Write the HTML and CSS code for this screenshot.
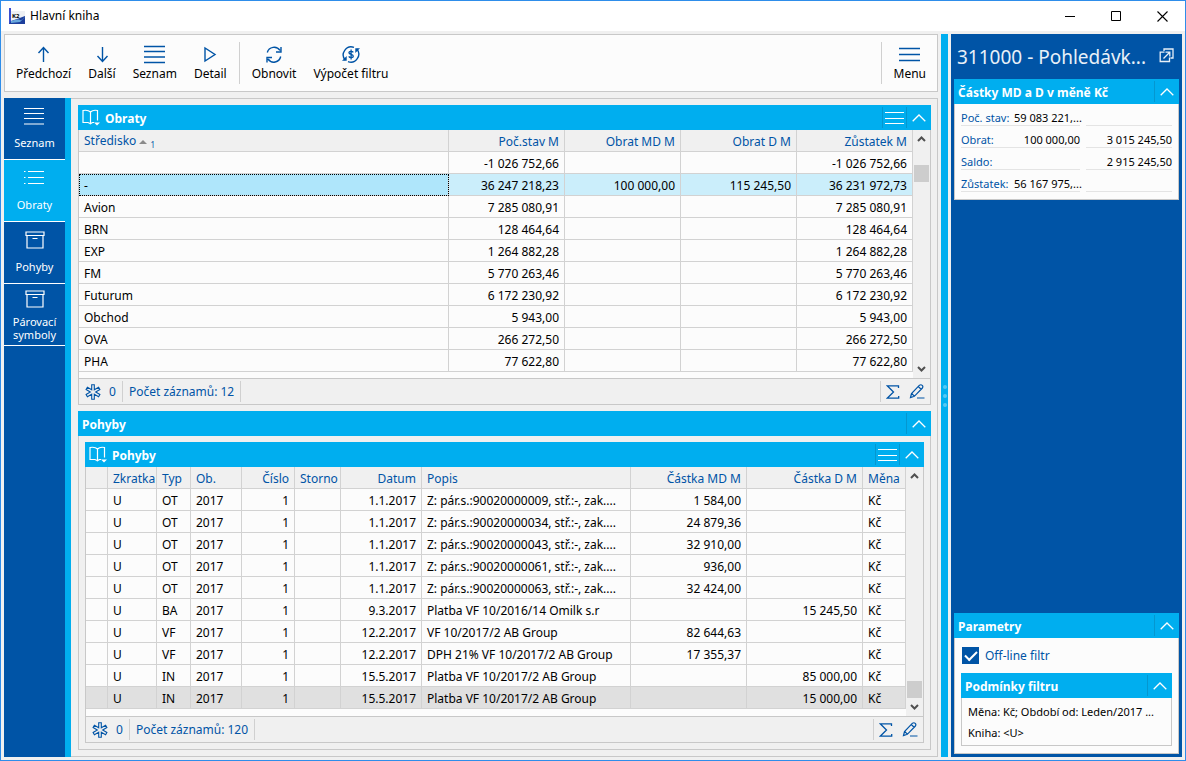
FILE: index.html
```html
<!DOCTYPE html>
<html lang="cs">
<head>
<meta charset="utf-8">
<title>Hlavní kniha</title>
<link rel="stylesheet" href="styles.css">
</head>
<body>
<svg class="defs" aria-hidden="true">
  <symbol id="chevron" viewBox="0 0 14 8"><path d="M.7 7.200 7 1l6.300 6.200" fill="none" stroke="currentColor" stroke-width="1.300"/></symbol>
  <symbol id="arrow-up" viewBox="0 0 9 6"><path d="M1 5 4.500 1.500 8 5" fill="none" stroke="currentColor" stroke-width="2"/></symbol>
  <symbol id="lines3" viewBox="0 0 20 14"><path d="M0 1.500h19M0 7.500h19M0 12.500h19" stroke="currentColor" stroke-width="1.200"/></symbol>
  <symbol id="book" viewBox="0 0 18 17"><path d="M8.500 3C7 1.500 4 1 1 1.500v12h5l2.500 1.200M8.500 3c1.500-1.500 4.500-2 7-1.500v10M8.500 3v11.700l2-1.200h1.500" fill="none" stroke="currentColor" stroke-width="1.200"/><path d="M12 13.500h6L15 16.500z" fill="currentColor"/></symbol>
  <symbol id="asterisk" viewBox="0 0 16 16"><g fill="none" stroke="currentColor" stroke-width="1.100"><path d="M6.700 5.700V.8h2.600v4.900l4.300-2.500 1.300 2.300L10.700 8l4.200 2.500-1.300 2.300-4.300-2.500v4.900H6.700v-4.900l-4.300 2.500-1.300-2.300L5.300 8 1.100 5.500l1.300-2.300z"/></g></symbol>
  <symbol id="sigma" viewBox="0 0 14 14"><path d="M12.500 3V.8H1.200L7.500 7l-6.300 6.200h11.500V11" fill="none" stroke="currentColor" stroke-width="1.300"/></symbol>
  <symbol id="pencil" viewBox="0 0 16 15"><path d="M1.500 13.500 2.500 9.500 10.500 1.200q1.500-1 2.700.2t.2 2.600L5.300 12.300zM2.700 9.500l2.600 2.600M9.300 2.500l2.800 2.700M8 14h7.500" fill="none" stroke="currentColor" stroke-width="1.200"/></symbol>
  <symbol id="archive" viewBox="0 0 20 18"><path d="M1 1h18v3.500H1zM2 4.500v12.500h16V4.500M7.500 7.500h5" fill="none" stroke="currentColor" stroke-width="1.200"/></symbol>
</svg>

<div class="window">
  <header class="titlebar">
    <svg class="logo" width="16" height="16" viewBox="0 0 16 16"><rect x="2" y="3" width="14" height="10" fill="#eef0f4"/><rect width="2" height="16" fill="#3a4fd0"/><path d="M2 13 8 11 16 8v8H0z" fill="#1d3f9c"/><path d="M2 13c4-1 7-2 9-1s3-2 5-3l-5 5-9 1z" fill="#68a8dd"/><text x="3" y="10" class="logo-text">K2</text></svg>
    <h1 class="titlebar-text">Hlavní kniha</h1>
    <div class="window-buttons">
      <button class="window-button" aria-label="Minimalizovat"><svg width="11" height="11" viewBox="0 0 11 11"><path d="M0 5.500h10" stroke="#000"/></svg></button>
      <button class="window-button" aria-label="Maximalizovat"><svg width="11" height="11" viewBox="0 0 11 11"><path d="M.5.5h9v9h-9z" fill="none" stroke="#000"/></svg></button>
      <button class="window-button" aria-label="Zavřít"><svg width="11" height="11" viewBox="0 0 11 11"><path d="m.5.5 10 10m0-10-10 10" stroke="#000" stroke-width="1.100"/></svg></button>
    </div>
  </header>

  <div class="workspace">
    <div class="left">
      <div class="toolbar" role="toolbar">
        <button class="tool"><svg width="22" height="20" viewBox="0 0 22 20"><path d="M10.500 18V4M5.500 9l5-5.500 5 5.500" fill="none" stroke="currentColor" stroke-width="1.400"/></svg>Předchozí</button>
        <button class="tool"><svg width="22" height="20" viewBox="0 0 22 20"><path d="M11.500 3v14M6.500 12l5 5.500 5-5.500" fill="none" stroke="currentColor" stroke-width="1.400"/></svg>Další</button>
        <button class="tool"><svg width="22" height="20" viewBox="0 0 22 20"><path d="M0 2.500h21M0 7.500h21M0 13h21M0 18.500h21" stroke="currentColor" stroke-width="1.400"/></svg>Seznam</button>
        <button class="tool"><svg width="22" height="20" viewBox="0 0 22 20"><path d="M6 4v13l10-6.500z" fill="none" stroke="currentColor" stroke-width="1.400"/></svg>Detail</button>
        <span class="divider"></span>
        <button class="tool"><svg width="22" height="20" viewBox="0 0 22 20"><path d="M4.300 8.500A7 7 0 0 1 17 6.500M18 3v5h-5M17.700 12.500A7 7 0 0 1 5 15M4 18.500v-5h5" fill="none" stroke="currentColor" stroke-width="1.400"/></svg>Obnovit</button>
        <button class="tool"><svg width="22" height="20" viewBox="0 0 22 20"><path d="M14 3.300A8 8 0 0 0 5.200 16M8 17.700A8 8 0 0 0 16.800 5" fill="none" stroke="currentColor" stroke-width="1.400"/><path d="M2 16.800h4.700V12zM20 4.200h-4.700V9z" fill="currentColor"/><path d="M13.300 8.300C12.300 6.800 8.800 7 9 8.800c.3 1.900 4.300 1.300 4.300 3.400 0 1.800-3.600 2-4.500.2M11.100 5.500v10" fill="none" stroke="currentColor" stroke-width="1.300"/></svg>Výpočet filtru</button>
        <span class="divider divider-end"></span>
        <button class="tool"><svg width="22" height="20" viewBox="0 0 22 20"><path d="M0 4.500h21M0 10.500h21M0 16.500h21" stroke="currentColor" stroke-width="1.400"/></svg>Menu</button>
      </div>

      <div class="body">
        <nav class="sidebar">
          <button class="nav-item"><svg width="22" height="20" viewBox="0 0 22 20"><path d="M0 2.500h20M0 7.500h20M0 12.500h20M0 18h20" stroke="currentColor" stroke-width="1.200"/></svg><span class="nav-label">Seznam</span></button>
          <button class="nav-item nav-active"><svg width="22" height="20" viewBox="0 0 22 20"><path d="M4 3.500h16M4 9.500h16M4 15.500h16M0 3.500h1.500M0 9.500h1.500M0 15.500h1.500" stroke="currentColor" stroke-width="1.200"/></svg><span class="nav-label">Obraty</span></button>
          <button class="nav-item"><svg width="20" height="20"><use href="#archive"/></svg><span class="nav-label">Pohyby</span></button>
          <button class="nav-item nav-double"><svg width="20" height="20"><use href="#archive"/></svg><span class="nav-label">Párovací<br>symboly</span></button>
        </nav>

        <main class="panel">
          <section class="card">
            <div class="bar">
              <svg width="18" height="17"><use href="#book"/></svg>
              <h2 class="bar-title">Obraty</h2>
              <button class="bar-button" aria-label="Nabídka"><svg width="20" height="14"><use href="#lines3"/></svg></button>
              <button class="bar-button bar-toggle" aria-label="Sbalit"><svg width="14" height="8"><use href="#chevron"/></svg></button>
            </div>
            <div class="grid-area">
              <table class="grid">
                <colgroup><col><col class="w-amount"><col class="w-amount"><col class="w-amount"><col class="w-amount"></colgroup>
                <thead><tr><th>Středisko <svg class="sort" width="8" height="4" viewBox="0 0 8 4"><path d="M0 4h8L4 0z" fill="#8a8a8a"/></svg> <sub class="sort-order">1</sub></th><th class="num">Poč.stav M</th><th class="num">Obrat MD M</th><th class="num">Obrat D M</th><th class="num">Zůstatek M</th></tr></thead>
                <tbody>
                  <tr><td></td><td class="num">-1 026 752,66</td><td></td><td></td><td class="num">-1 026 752,66</td></tr>
                  <tr class="selected"><td class="focused">-</td><td class="num">36 247 218,23</td><td class="num">100 000,00</td><td class="num">115 245,50</td><td class="num">36 231 972,73</td></tr>
                  <tr><td>Avion</td><td class="num">7 285 080,91</td><td></td><td></td><td class="num">7 285 080,91</td></tr>
                  <tr><td>BRN</td><td class="num">128 464,64</td><td></td><td></td><td class="num">128 464,64</td></tr>
                  <tr><td>EXP</td><td class="num">1 264 882,28</td><td></td><td></td><td class="num">1 264 882,28</td></tr>
                  <tr><td>FM</td><td class="num">5 770 263,46</td><td></td><td></td><td class="num">5 770 263,46</td></tr>
                  <tr><td>Futurum</td><td class="num">6 172 230,92</td><td></td><td></td><td class="num">6 172 230,92</td></tr>
                  <tr><td>Obchod</td><td class="num">5 943,00</td><td></td><td></td><td class="num">5 943,00</td></tr>
                  <tr><td>OVA</td><td class="num">266 272,50</td><td></td><td></td><td class="num">266 272,50</td></tr>
                  <tr><td>PHA</td><td class="num">77 622,80</td><td></td><td></td><td class="num">77 622,80</td></tr>
                </tbody>
              </table>
              <div class="scrollbar">
                <button class="scroll-arrow" aria-label="Nahoru"><svg width="9" height="6"><use href="#arrow-up"/></svg></button>
                <span class="thumb thumb-top"></span>
                <button class="scroll-arrow scroll-down" aria-label="Dolů"><svg width="9" height="6"><use href="#arrow-up"/></svg></button>
              </div>
            </div>
            <footer class="status">
              <span class="status-cell status-marks"><svg width="16" height="16"><use href="#asterisk"/></svg>0</span>
              <span class="status-cell">Počet záznamů: 12</span>
              <span class="status-tools"><button class="status-button" aria-label="Součet"><svg width="14" height="14"><use href="#sigma"/></svg></button><button class="status-button" aria-label="Upravit"><svg width="16" height="15"><use href="#pencil"/></svg></button></span>
            </footer>
          </section>

          <section class="group">
            <div class="bar">
              <h2 class="bar-title">Pohyby</h2>
              <button class="bar-button bar-toggle" aria-label="Sbalit"><svg width="14" height="8"><use href="#chevron"/></svg></button>
            </div>
            <div class="group-body">
              <section class="card card-fill">
                <div class="bar">
                  <svg width="18" height="17"><use href="#book"/></svg>
                  <h3 class="bar-title">Pohyby</h3>
                  <button class="bar-button" aria-label="Nabídka"><svg width="20" height="14"><use href="#lines3"/></svg></button>
                  <button class="bar-button bar-toggle" aria-label="Sbalit"><svg width="14" height="8"><use href="#chevron"/></svg></button>
                </div>
                <div class="grid-area">
                  <table class="grid">
                    <colgroup><col class="w-mark"><col class="w-code"><col class="w-type"><col class="w-period"><col class="w-number"><col class="w-storno"><col class="w-date"><col><col class="w-amount"><col class="w-amount"><col class="w-currency"></colgroup>
                    <thead><tr><th></th><th>Zkratka</th><th>Typ</th><th>Ob.</th><th class="num">Číslo</th><th>Storno</th><th class="num">Datum</th><th>Popis</th><th class="num">Částka MD M</th><th class="num">Částka D M</th><th>Měna</th></tr></thead>
                    <tbody>
                      <tr><td></td><td>U</td><td>OT</td><td>2017</td><td class="num">1</td><td></td><td class="num">1.1.2017</td><td>Z: pár.s.:90020000009, stř.:-, zak....</td><td class="num">1 584,00</td><td></td><td>Kč</td></tr>
                      <tr><td></td><td>U</td><td>OT</td><td>2017</td><td class="num">1</td><td></td><td class="num">1.1.2017</td><td>Z: pár.s.:90020000034, stř.:-, zak....</td><td class="num">24 879,36</td><td></td><td>Kč</td></tr>
                      <tr><td></td><td>U</td><td>OT</td><td>2017</td><td class="num">1</td><td></td><td class="num">1.1.2017</td><td>Z: pár.s.:90020000043, stř.:-, zak....</td><td class="num">32 910,00</td><td></td><td>Kč</td></tr>
                      <tr><td></td><td>U</td><td>OT</td><td>2017</td><td class="num">1</td><td></td><td class="num">1.1.2017</td><td>Z: pár.s.:90020000061, stř.:-, zak....</td><td class="num">936,00</td><td></td><td>Kč</td></tr>
                      <tr><td></td><td>U</td><td>OT</td><td>2017</td><td class="num">1</td><td></td><td class="num">1.1.2017</td><td>Z: pár.s.:90020000063, stř.:-, zak....</td><td class="num">32 424,00</td><td></td><td>Kč</td></tr>
                      <tr><td></td><td>U</td><td>BA</td><td>2017</td><td class="num">1</td><td></td><td class="num">9.3.2017</td><td>Platba VF 10/2016/14 Omilk s.r</td><td></td><td class="num">15 245,50</td><td>Kč</td></tr>
                      <tr><td></td><td>U</td><td>VF</td><td>2017</td><td class="num">1</td><td></td><td class="num">12.2.2017</td><td>VF 10/2017/2 AB Group</td><td class="num">82 644,63</td><td></td><td>Kč</td></tr>
                      <tr><td></td><td>U</td><td>VF</td><td>2017</td><td class="num">1</td><td></td><td class="num">12.2.2017</td><td>DPH 21% VF 10/2017/2 AB Group</td><td class="num">17 355,37</td><td></td><td>Kč</td></tr>
                      <tr><td></td><td>U</td><td>IN</td><td>2017</td><td class="num">1</td><td></td><td class="num">15.5.2017</td><td>Platba VF 10/2017/2 AB Group</td><td></td><td class="num">85 000,00</td><td>Kč</td></tr>
                      <tr class="current"><td></td><td>U</td><td>IN</td><td>2017</td><td class="num">1</td><td></td><td class="num">15.5.2017</td><td>Platba VF 10/2017/2 AB Group</td><td></td><td class="num">15 000,00</td><td>Kč</td></tr>
                    </tbody>
                  </table>
                  <div class="scrollbar">
                    <button class="scroll-arrow" aria-label="Nahoru"><svg width="9" height="6"><use href="#arrow-up"/></svg></button>
                    <span class="thumb thumb-end"></span>
                    <button class="scroll-arrow scroll-down" aria-label="Dolů"><svg width="9" height="6"><use href="#arrow-up"/></svg></button>
                  </div>
                </div>
                <footer class="status">
                  <span class="status-cell status-marks"><svg width="16" height="16"><use href="#asterisk"/></svg>0</span>
                  <span class="status-cell">Počet záznamů: 120</span>
                  <span class="status-tools"><button class="status-button" aria-label="Součet"><svg width="14" height="14"><use href="#sigma"/></svg></button><button class="status-button" aria-label="Upravit"><svg width="16" height="15"><use href="#pencil"/></svg></button></span>
                </footer>
              </section>
            </div>
          </section>
        </main>
      </div>
    </div>

    <div class="splitter"><span class="dot"></span><span class="dot"></span><span class="dot"></span></div>

    <aside class="preview">
      <div class="preview-head">
        <h2 class="preview-title">311000 - Pohledávk...</h2>
        <button class="open-button" aria-label="Otevřít"><svg width="15" height="15" viewBox="0 0 15 15"><path d="M5 3V1h9v9h-2.500M5.500 4.200H1.200V13.500h9.300V9.500M4.500 10.500l6-6M6.500 4.200h4.300v4.300" fill="none" stroke="currentColor" stroke-width="1.300"/></svg></button>
      </div>
      <section class="box">
        <div class="bar">
          <h3 class="bar-title">Částky MD a D v měně Kč</h3>
          <button class="bar-button bar-toggle" aria-label="Sbalit"><svg width="14" height="8"><use href="#chevron"/></svg></button>
        </div>
        <dl class="amounts">
          <div class="amount-row"><dt class="amount-name">Poč. stav:</dt><dd class="amount">59 083 221,...</dd><dd class="amount amount-second"></dd></div>
          <div class="amount-row"><dt class="amount-name">Obrat:</dt><dd class="amount">100 000,00</dd><dd class="amount amount-second">3 015 245,50</dd></div>
          <div class="amount-row"><dt class="amount-name">Saldo:</dt><dd class="amount"></dd><dd class="amount amount-second">2 915 245,50</dd></div>
          <div class="amount-row"><dt class="amount-name">Zůstatek:</dt><dd class="amount">56 167 975,...</dd><dd class="amount amount-second"></dd></div>
        </dl>
      </section>

      <section class="box box-bottom">
        <div class="bar">
          <h3 class="bar-title">Parametry</h3>
          <button class="bar-button bar-toggle" aria-label="Sbalit"><svg width="14" height="8"><use href="#chevron"/></svg></button>
        </div>
        <div class="parameters">
          <label class="check-label" for="offline"><input class="check" type="checkbox" id="offline" checked>Off-line filtr</label>
          <section class="filter">
            <div class="bar">
              <h4 class="bar-title">Podmínky filtru</h4>
              <button class="bar-button bar-toggle" aria-label="Sbalit"><svg width="14" height="8"><use href="#chevron"/></svg></button>
            </div>
            <div class="filter-body">
              <p class="filter-line">Měna: Kč; Období od: Leden/2017 ...</p>
              <p class="filter-line">Kniha: &lt;U&gt;</p>
            </div>
          </section>
        </div>
      </section>
    </aside>
  </div>
</div>
</body>
</html>
```
FILE: styles.css
```css
:root {
  --blue: #0054a6;
  --cyan: #00aeef;
  --line: #c8c8c8;
  --cell-line: #d2d2d2;
  --surface: #fcfcfc;
  --face: #f0f0f0;
}

* {
  box-sizing: border-box;
}

body {
  margin: 0;
  font: 12px/16px "Noto Sans", "Open Sans", sans-serif;
  color: #000;
  white-space: nowrap;
}

h1, h2, h3, h4, p, dl, dd {
  margin: 0;
  font-size: 12px;
}

button {
  margin: 0;
  padding: 0;
  border: 0;
  background: none;
  font: inherit;
  color: inherit;
}

svg {
  display: block;
  flex: none;
}

.defs {
  display: none;
}

.window {
  display: flex;
  flex-direction: column;
  min-height: 100vh;
  border: 1px solid #2e8dea;
  background: var(--face);
}

/* Title bar */
.titlebar {
  display: flex;
  align-items: center;
  height: 30px;
  padding-left: 8px;
  background: #fff;
}

.logo-text {
  font: bold 6px "Noto Sans", sans-serif;
}

.titlebar-text {
  margin-left: 5px;
  font-weight: normal;
}

.window-buttons {
  display: flex;
  margin-left: auto;
}

.window-button {
  display: flex;
  justify-content: center;
  width: 46px;
}

/* Workspace */
.workspace {
  flex: 1;
  display: grid;
  grid-template-columns: minmax(0, 1fr) 7px 231px;
  gap: 3px;
  padding: 3px;
}

.left {
  display: flex;
  flex-direction: column;
  gap: 6px;
}

.toolbar {
  display: flex;
  align-items: center;
  gap: 1px;
  height: 58px;
  padding: 0 3px;
  border: 1px solid var(--line);
  background: var(--surface);
}

.tool {
  display: flex;
  flex-direction: column;
  align-items: center;
  gap: 2px;
  padding: 0 8px;
}

.tool svg {
  color: var(--blue);
}

.divider {
  width: 1px;
  height: 42px;
  margin: 0 3px;
  background: #d0d0d0;
}

.divider-end {
  margin-left: auto;
}

.body {
  flex: 1;
  display: flex;
}

/* Module navigation */
.sidebar {
  width: 67px;
  border-right: 6px solid var(--cyan);
  background: var(--blue);
}

.nav-item {
  display: flex;
  flex-direction: column;
  align-items: center;
  gap: 10px;
  width: 100%;
  height: 62px;
  padding-top: 8px;
  border-bottom: 1px solid #fff;
  font-size: 11px;
  line-height: 13px;
  color: #fff;
}

.nav-active {
  background: var(--cyan);
}

.nav-double {
  gap: 6px;
  padding-top: 5px;
}

/* Main panel */
.panel {
  flex: 1;
  display: flex;
  flex-direction: column;
  gap: 6px;
  min-width: 0;
  padding: 6px 6px 6px 7px;
  border: solid var(--line);
  border-width: 1px 1px 1px 0;
}

.bar {
  display: flex;
  align-items: center;
  height: 25px;
  padding-left: 4px;
  background: var(--cyan);
  color: #fff;
}

.bar-title {
  flex: 1;
  padding-top: 2px;
  font-weight: bold;
}

.bar svg + .bar-title {
  margin-left: 5px;
}

.bar-button {
  display: flex;
  align-items: center;
  justify-content: center;
  width: 24px;
  height: 21px;
  border-left: 1px solid #0497d0;
}

.bar-toggle {
  width: 25px;
}

.card {
  display: flex;
  flex-direction: column;
}

.card-fill,
.group {
  flex: 1;
}

.group {
  display: flex;
  flex-direction: column;
}

.group-body {
  flex: 1;
  display: flex;
  flex-direction: column;
  padding: 6px;
  border: 1px solid var(--line);
  border-top: 0;
}

/* Data grids */
.grid-area {
  flex: 1;
  display: flex;
  align-items: stretch;
  min-height: 248px;
  border: solid var(--line);
  border-width: 0 1px;
  background: var(--surface);
}

.grid {
  flex: 1;
  align-self: flex-start;
  width: 100%;
  min-width: 0;
  table-layout: fixed;
  border-spacing: 0;
}

.grid th,
.grid td {
  height: 22px;
  padding: 2px 5px 0;
  border: solid var(--cell-line);
  border-width: 0 1px 1px 0;
  overflow: hidden;
  text-align: left;
}

.grid th {
  background: var(--face);
  font-weight: normal;
  color: var(--blue);
}

.grid .num {
  text-align: right;
}

.selected td {
  background: #cbeefb;
}

.selected .focused {
  background: #afe6fb;
  outline: 1px dotted #000;
  outline-offset: -1px;
}

.current td {
  background: #e0e0e0;
}

.sort {
  display: inline-block;
  vertical-align: middle;
}

.sort-order {
  font-size: 8px;
  line-height: 8px;
}

.w-amount { width: 116px; }
.w-mark { width: 22px; }
.w-code { width: 49px; }
.w-type { width: 34px; }
.w-period { width: 51px; }
.w-number { width: 53px; }
.w-storno { width: 46px; }
.w-date { width: 81px; }
.w-currency { width: 43px; }

.scrollbar {
  flex: none;
  display: flex;
  flex-direction: column;
  align-items: center;
  width: 17px;
  background: var(--face);
}

.scroll-arrow {
  display: flex;
  align-items: center;
  justify-content: center;
  width: 17px;
  height: 18px;
  color: #505050;
}

.scroll-down {
  transform: rotate(180deg);
}

.thumb {
  width: 15px;
  height: 17px;
  background: #cdcdcd;
}

.thumb-top {
  margin: 17px 0 auto;
}

.thumb-end {
  margin-top: auto;
}

.status {
  display: flex;
  align-items: center;
  height: 27px;
  border: 1px solid var(--line);
  color: var(--blue);
}

.status-cell {
  display: flex;
  align-items: center;
  height: 21px;
  padding: 0 6px;
  border-right: 1px solid #d0d0d0;
}

.status-marks {
  gap: 8px;
}

.status-tools {
  display: flex;
  align-items: center;
  gap: 9px;
  height: 21px;
  margin-left: auto;
  padding: 0 5px;
  border-left: 1px solid #d0d0d0;
}

/* Splitter */
.splitter {
  display: flex;
  flex-direction: column;
  align-items: center;
  justify-content: center;
  gap: 5px;
  background: var(--cyan);
}

.dot {
  width: 4px;
  height: 4px;
  border-radius: 2px;
  background: #54c8f4;
}

/* Preview */
.preview {
  display: flex;
  flex-direction: column;
  min-width: 0;
  padding: 0 3px 3px;
  background: var(--blue);
}

.preview-head {
  display: flex;
  align-items: center;
  justify-content: space-between;
  height: 45px;
  padding: 0 5px 2px 3px;
  color: #e8f0f8;
}

.preview-title {
  padding-top: 2px;
  font-size: 19px;
  line-height: 26px;
  font-weight: normal;
}

.box {
  background: var(--surface);
}

.box-bottom {
  margin-top: auto;
}

.amounts {
  padding: 0 6px 7px;
  border: 1px solid var(--line);
  border-top: 0;
}

.amount-row {
  display: grid;
  grid-template-columns: 53px 66px minmax(0, 1fr);
  height: 22px;
  align-items: end;
}

.amount-name,
.amount {
  height: 18px;
  border-bottom: 1px solid #e4e4e4;
  font-size: 11px;
  line-height: 20px;
}

.amount-name {
  color: var(--blue);
}

.amount {
  text-align: right;
}

.amount-second {
  margin-left: 6px;
}

.parameters {
  padding: 9px 6px 7px;
  border: 1px solid var(--line);
  border-top: 0;
}

.check-label {
  display: flex;
  align-items: center;
  gap: 6px;
  padding-left: 1px;
  color: var(--blue);
}

.check {
  appearance: none;
  width: 17px;
  height: 17px;
  margin: 0;
  background: var(--blue);
  display: grid;
  place-items: center;
}

.check:checked::before {
  content: "";
  width: 10px;
  height: 5px;
  margin-bottom: 3px;
  border: solid #fff;
  border-width: 0 0 2px 2px;
  transform: rotate(-45deg);
}

.filter {
  margin-top: 9px;
}

.filter-body {
  padding: 3px 6px 2px;
  border: 1px solid var(--line);
  border-top: 0;
}

.filter-line {
  font-size: 11px;
  line-height: 21px;
}
```
